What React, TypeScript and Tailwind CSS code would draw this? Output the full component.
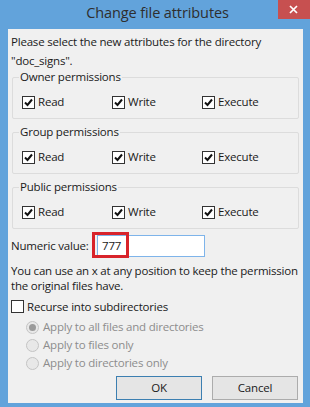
import React from 'react';

const font = { fontFamily: '"Open Sans", "Noto Sans", sans-serif' };

const CheckBox = ({ checked }: { checked: boolean }) => (
  <span className="w-[13px] h-[13px] border border-[#333] bg-white flex items-center justify-center shrink-0">
    {checked && (
      <svg width="9" height="9" viewBox="0 0 9 9">
        <path d="M1 4.5 L3.5 7 L8 1.5" stroke="#111" strokeWidth="2" fill="none" />
      </svg>
    )}
  </span>
);

const Radio = ({ selected }: { selected: boolean }) => (
  <span className="w-[13px] h-[13px] rounded-full border border-[#c4c4c4] bg-[#e8e8e8] flex items-center justify-center shrink-0">
    {selected && <span className="w-[7px] h-[7px] rounded-full bg-[#9a9a9a]" />}
  </span>
);

const Group = ({ title }: { title: string }) => (
  <div className="relative mx-[1px] h-[42px] border border-[#dcdcdc] rounded-[2px]">
    <span className="absolute left-[6px] top-[-10px] bg-[#f0f0f0] px-[1px] leading-[18px]">{title}</span>
    <div className="flex items-center h-full pt-[8px] pl-[9px]">
      {['Read', 'Write', 'Execute'].map((l) => (
        <div key={l} className="flex items-center gap-[3px] w-[90px]">
          <CheckBox checked />
          <span>{l}</span>
        </div>
      ))}
    </div>
  </div>
);

const App = () => {
  return (
    <div
      className="w-[310px] h-[407px] bg-[#62a3db] flex flex-col text-[11.5px] tracking-[-0.2px] text-[#1a1a1a]"
      style={font}
    >
      {/* Title bar */}
      <div className="h-[29px] relative flex justify-center shrink-0">
        <span className="text-[14.5px] tracking-[-0.1px] text-[#2e2e2e] leading-[20px] pt-[3px] pl-[5px]">Change file attributes</span>
        <div className="absolute left-[278px] top-0 w-[32px] h-[19px] bg-[#c75050] flex items-center justify-center pr-[2px]">
          <svg width="9" height="9" viewBox="0 0 9 9">
            <path d="M1 1 L8 8 M8 1 L1 8" stroke="#fff" strokeWidth="1.7" />
          </svg>
        </div>
      </div>

      {/* Client area */}
      <div className="ml-[8px] w-[295px] h-[374px] bg-[#f0f0f0] flex flex-col px-[3px] pt-[3px]">
        <p className="leading-[19px]">
          Please select the new attributes for the directory
          <br />"doc_signs".
        </p>

        <div className="mt-[7px] flex flex-col gap-[13px]">
          <Group title="Owner permissions" />
          <Group title="Group permissions" />
          <Group title="Public permissions" />
        </div>

        <div className="flex items-center mt-[6px] h-[22px]">
          <span className="w-[86px]">Numeric value:</span>
          <div className="relative w-[108px] h-[22px] border border-[#7eb4ea] bg-white flex items-center">
            <span className="pl-[4px]">777</span>
            <div className="absolute left-[-6px] top-[-4px] w-[37px] h-[26px] border-[3px] border-[#d8232a]" />
          </div>
        </div>

        <p className="mt-[6px] leading-[15px]">
          You can use an x at any position to keep the permission
          <br />the original files have.
        </p>

        <div className="flex items-center gap-[3px] mt-[6px] h-[15px]">
          <CheckBox checked={false} />
          <span>Recurse into subdirectories</span>
        </div>

        <div className="flex flex-col pl-[15px] mt-[4px] text-[#8d8d8d] leading-[18px]">
          {['Apply to all files and directories', 'Apply to files only', 'Apply to directories only'].map((l, i) => (
            <div key={l} className="flex items-center gap-[4px]">
              <Radio selected={i === 0} />
              <span>{l}</span>
            </div>
          ))}
        </div>

        <div className="flex justify-end gap-[10px] mt-[4px] pr-[2px]">
          <button className="w-[86px] h-[24px] border border-[#3c7fb1] bg-[#e5e5e5] text-[#1a1a1a]">OK</button>
          <button className="w-[86px] h-[24px] border border-[#acacac] bg-[#e5e5e5] text-[#1a1a1a]">Cancel</button>
        </div>
      </div>
    </div>
  );
};

export default App;
